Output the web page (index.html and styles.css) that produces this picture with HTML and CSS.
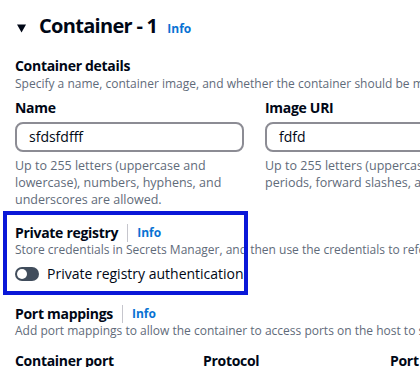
FILE: index.html
```html
<!DOCTYPE html>
<html lang="en">
  <head>
    <meta charset="UTF-8" />
    <meta name="viewport" content="width=device-width, initial-scale=1.0" />
    <title>Container - 1</title>
    <link rel="stylesheet" href="styles.css">
  </head>
  <body>
    <div class="panel">
      <h2 class="container-title">
        <svg class="caret" width="9" height="9" viewBox="0 0 9 9">
          <polygon points="0,0.5 9,0.5 4.5,8.5" fill="#000716" />
        </svg>
        <span>Container - 1</span>
        <a class="info" href="#">Info</a>
      </h2>

      <div class="group details">
        <h3>Container details</h3>
        <p class="desc">Specify a name, container image, and whether the container should be marked as essential.</p>
      </div>

      <div class="fields">
        <div class="field">
          <label>Name</label>
          <div class="input">sfdsfdfff</div>
          <p class="hint">Up to 255 letters (uppercase and lowercase), numbers, hyphens, and underscores are allowed.</p>
        </div>
        <div class="field">
          <label>Image URI</label>
          <div class="input">fdfd</div>
          <p class="hint">Up to 255 letters (uppercase and lowercase), numbers, hyphens, underscores, colons, periods, forward slashes, and number signs are allowed.</p>
        </div>
      </div>

      <div class="group registry">
        <div class="highlight"></div>
        <h3>Private registry <span class="sep"></span><a class="info" href="#">Info</a></h3>
        <p class="desc">Store credentials in Secrets Manager, and then use the credentials to reference images in private registries.</p>
        <div class="toggle-row">
          <span class="toggle"><span class="knob"></span></span>
          <span>Private registry authentication</span>
        </div>
      </div>

      <div class="group ports">
        <h3>Port mappings <span class="sep"></span><a class="info" href="#">Info</a></h3>
        <p class="desc">Add port mappings to allow the container to access ports on the host to send or receive traffic.</p>
      </div>

      <div class="port-head">
        <span>Container port</span>
        <span>Protocol</span>
        <span>Port name</span>
      </div>
    </div>
  </body>
</html>
```

FILE: styles.css
```css
body {
  margin: 0;
  font-family: "Open Sans", Arial, sans-serif;
  color: #000716;
  background: #fff;
  overflow: hidden;
}

.panel {
  box-sizing: border-box;
  margin: -12px 0 0 -12px;
  padding: 23px 0 0 26px;
  border: 1px solid #e9ebed;
  border-radius: 16px;
  width: 820px;
  height: 500px;
}

.container-title {
  display: flex;
  align-items: baseline;
  margin: 0;
  font-size: 20px;
  font-weight: 700;
  letter-spacing: -0.7px;
  line-height: 28px;
  white-space: nowrap;
}

.caret {
  align-self: center;
  margin: 2px 13px 0 2px;
}

.info {
  color: #0972d3;
  font-size: 12px;
  font-weight: 700;
  letter-spacing: 0;
  text-decoration: none;
  margin-left: 9px;
}

.container-title .info {
  margin-left: 10px;
}

h3 {
  display: flex;
  align-items: center;
  margin: 0;
  font-size: 14px;
  font-weight: 700;
  letter-spacing: -0.3px;
  line-height: 16px;
  white-space: nowrap;
}

.sep {
  width: 1px;
  height: 18px;
  background: #c6c6cd;
  margin-left: 9px;
}

.desc {
  margin: 1px 0 0;
  font-size: 12px;
  line-height: 14px;
  color: #5f6b7a;
  white-space: nowrap;
}

.details {
  margin-top: 15px;
}

.details .desc {
  margin-top: 3px;
}

.fields {
  display: grid;
  grid-template-columns: 229px 522px;
  gap: 21px;
  margin-top: 8px;
}

.field label {
  display: block;
  font-size: 14px;
  font-weight: 700;
  letter-spacing: -0.3px;
  line-height: 18px;
}

.input {
  margin-top: 5px;
  height: 26px;
  border: 2px solid #8c8c94;
  border-radius: 8px;
  padding: 0 12px;
  font-size: 14px;
  line-height: 26px;
}

.field p.hint {
  margin: 5px 0 0;
  font-size: 12.5px;
  line-height: 17px;
  color: #5f6b7a;
}

.registry {
  position: relative;
  margin-top: 16px;
}

.highlight {
  box-sizing: border-box;
  position: absolute;
  left: -12px;
  top: -13px;
  width: 245px;
  height: 84px;
  border: 4px solid #0a18d8;
}

.toggle-row {
  display: flex;
  align-items: center;
  gap: 8px;
  margin-top: 8px;
  font-size: 14px;
  line-height: 18px;
}

.toggle {
  display: flex;
  align-items: center;
  width: 24px;
  height: 14px;
  border-radius: 7px;
  background: #414d5c;
}

.knob {
  width: 10px;
  height: 10px;
  margin-left: 2px;
  border-radius: 50%;
  background: #fff;
}

.ports {
  margin-top: 22px;
}

.port-head {
  display: grid;
  grid-template-columns: 188px 187px 200px;
  margin-top: 14px;
  font-size: 14px;
  font-weight: 700;
  letter-spacing: -0.3px;
  line-height: 18px;
  white-space: nowrap;
}
```
